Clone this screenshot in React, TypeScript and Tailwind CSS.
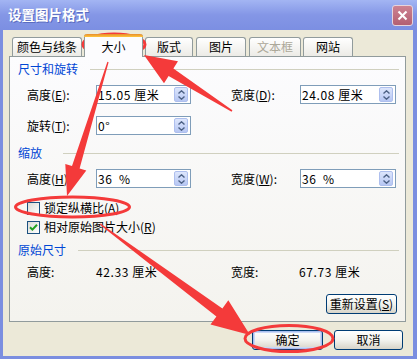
import React from "react";

const F = "font-['Noto_Sans_CJK_SC',sans-serif]";

function Spin({ value, w }: { value: string; w: string }) {
  return (
    <div className={`${w} h-[19px] border border-[#7f9db9] bg-white flex items-center`}>
      <span className="pl-[1px] text-[12px] leading-none whitespace-pre text-black tracking-[0.6px]">{value}</span>
      <div className="ml-auto mr-[2px] w-[14px] h-[15px] rounded-[2px] border border-[#aebfee] bg-linear-to-b from-[#dde6fc] to-[#b7c7f3] flex flex-col items-center justify-center gap-[2px]">
        <svg width="7" height="4" viewBox="0 0 7 4">
          <polyline points="0.5,3.5 3.5,0.8 6.5,3.5" fill="none" stroke="#4d6185" strokeWidth="1.4" />
        </svg>
        <svg width="7" height="4" viewBox="0 0 7 4">
          <polyline points="0.5,0.5 3.5,3.2 6.5,0.5" fill="none" stroke="#4d6185" strokeWidth="1.4" />
        </svg>
      </div>
    </div>
  );
}

function Heading({ text, gap }: { text: string; gap: string }) {
  return (
    <div className={`h-[16px] flex items-center pl-[8px] pr-[6px] ${gap}`}>
      <span className="text-[12px] leading-none text-[#0046d5]">{text}</span>
      <div className="flex-1 h-px bg-[#d0d0bf]" />
    </div>
  );
}

function Label({ children, w = "w-[69px]" }: { children: React.ReactNode; w?: string }) {
  return <span className={`${w} text-[12px] leading-none text-black whitespace-pre`}>{children}</span>;
}

function Check({ checked }: { checked?: boolean }) {
  return (
    <div className="w-[13px] h-[13px] border border-[#1c5180] bg-linear-to-br from-[#dcdcd7] to-white flex items-center justify-center">
      {checked && (
        <svg width="9" height="9" viewBox="0 0 9 9">
          <polyline points="1,4.2 3.4,6.6 8,1.8" fill="none" stroke="#21a121" strokeWidth="2" />
        </svg>
      )}
    </div>
  );
}

function Btn({ children, w, def }: { children: React.ReactNode; w: string; def?: boolean }) {
  return (
    <div
      className={`${w} h-[20px] rounded-[3px] border border-[#003c74] bg-linear-to-b from-white via-[#f3f3ef] to-[#d8d4c8] flex items-center justify-center text-[12px] leading-none text-black ${
        def ? "shadow-[inset_0_0_0_1px_#a9bff0,inset_0_0_0_2px_#cbd8f6]" : ""
      }`}
    >
      {children}
    </div>
  );
}

function Tab({ text, w, ml, disabled }: { text: string; w: string; ml: string; disabled?: boolean }) {
  return (
    <div
      className={`${w} ${ml} h-[19px] rounded-t-[3px] border border-b-0 border-[#919b9c] bg-linear-to-b from-white to-[#ecebe6] flex items-center justify-center text-[12px] leading-none ${
        disabled ? "text-[#aca899]" : "text-black"
      }`}
    >
      {text}
    </div>
  );
}

export default function App() {
  return (
    <div className={`${F} relative w-[417px] h-[359px] bg-[#7b8ee0] flex flex-col overflow-hidden`}>
      {/* title bar */}
      <div className="h-[30px] flex items-center justify-between pl-[8px] pr-[4px] bg-linear-to-b from-[#a3b5f3] via-[#8496e6] to-[#7c8fe2]">
        <span className="text-[13.5px] font-bold text-white leading-none [text-shadow:1px_1px_0_#5a6cc0]">设置图片格式</span>
        <div className="w-[21px] h-[21px] rounded-[3px] border border-[#e6d4dc] bg-linear-to-b from-[#cd8292] to-[#b35f72] flex items-center justify-center">
          <svg width="11" height="11" viewBox="0 0 11 11">
            <line x1="1.5" y1="1.5" x2="9.5" y2="9.5" stroke="white" strokeWidth="2.2" />
            <line x1="9.5" y1="1.5" x2="1.5" y2="9.5" stroke="white" strokeWidth="2.2" />
          </svg>
        </div>
      </div>

      {/* body */}
      <div className="flex-1 ml-[3px] mr-[4px] mb-[3px] bg-[#ece9d8] flex flex-col">
        {/* tabs */}
        <div className="h-[26px] flex items-end pl-[9px]">
          <Tab text="颜色与线条" w="w-[70px]" ml="ml-0" />
          <div className="relative z-10 ml-[2px] w-[59px] h-[23px] -mb-[1px] rounded-t-[3px] border-x border-[#919b9c] bg-[#fcfcfe] flex flex-col">
            <div className="h-[3px] rounded-t-[3px] bg-linear-to-b from-[#e68b2c] to-[#ffc73c] -mx-[1px]" />
            <div className="flex-1 flex items-center justify-center text-[12px] leading-none text-black">大小</div>
          </div>
          <Tab text="版式" w="w-[48px]" ml="ml-[2px]" />
          <Tab text="图片" w="w-[50px]" ml="ml-[3px]" />
          <Tab text="文本框" w="w-[52px]" ml="ml-[3px]" disabled />
          <Tab text="网站" w="w-[50px]" ml="ml-[2px]" />
        </div>

        {/* panel */}
        <div className="ml-[6px] w-[397px] h-[266px] border border-[#919b9c] bg-linear-to-b from-[#fcfcfe] to-[#f4f3ee] flex flex-col pt-[4px]">
          <Heading text="尺寸和旋转" gap="gap-[12px]" />
          <div className="mt-[8px] flex items-center pl-[17px]">
            <Label>高度(<u>E</u>):</Label>
            <Spin value="15.05 厘米" w="w-[95px]" />
            <span className="ml-[40px]" />
            <Label>宽度(<u>D</u>):</Label>
            <Spin value="24.08 厘米" w="w-[96px]" />
          </div>
          <div className="mt-[12px] flex items-center pl-[17px]">
            <Label>旋转(<u>T</u>):</Label>
            <Spin value="0°" w="w-[95px]" />
          </div>

          <div className="mt-[10px]">
            <Heading text="缩放" gap="gap-[21px]" />
          </div>
          <div className="mt-[8px] flex items-center pl-[17px]">
            <Label>高度(<u>H</u>):</Label>
            <Spin value="36  %" w="w-[95px]" />
            <span className="ml-[40px]" />
            <Label>宽度(<u>W</u>):</Label>
            <Spin value="36  %" w="w-[96px]" />
          </div>
          <div className="mt-[12px] h-[16px] flex items-center pl-[17px] gap-[4px]">
            <Check />
            <span className="text-[12px] leading-none">锁定纵横比(<u>A</u>)</span>
          </div>
          <div className="mt-[3px] h-[16px] flex items-center pl-[17px] gap-[4px]">
            <Check checked />
            <span className="text-[12px] leading-none">相对原始图片大小(<u>R</u>)</span>
          </div>

          <div className="mt-[7px]">
            <Heading text="原始尺寸" gap="gap-[12px]" />
          </div>
          <div className="mt-[6px] h-[16px] flex items-center pl-[17px]">
            <Label>高度:</Label>
            <span className="w-[135px] text-[12px] leading-none whitespace-pre tracking-[0.6px]">42.33 厘米</span>
            <Label w="w-[68px]">宽度:</Label>
            <span className="text-[12px] leading-none whitespace-pre tracking-[0.6px]">67.73 厘米</span>
          </div>
          <div className="mt-[14px] flex justify-end pr-[8px]">
            <Btn w="w-[71px]">重新设置(<u>S</u>)</Btn>
          </div>
        </div>

        {/* dialog buttons */}
        <div className="mt-[8px] flex justify-end pr-[10px] gap-[11px]">
          <Btn w="w-[71px]" def>确定</Btn>
          <Btn w="w-[69px]">取消</Btn>
        </div>
      </div>

      {/* red annotations */}
      <svg className="absolute left-0 top-0 pointer-events-none" width="417" height="359" viewBox="0 0 417 359">
        <g fill="#f43a3a">
          <polygon points="144,55 178,61.2 173.4,68.4 232.4,110.3 231.6,111.7 168.6,76 164,83.2" />
          <polygon points="67,196 86.3,170.5 79.6,168.5 108.6,62.2 107.4,61.8 72,166.1 65.3,164.1" />
          <polygon points="250,335 210.5,324.5 216.4,316.4 99.6,224.5 100.4,223.5 222.4,308.4 228.3,300.3" />
        </g>
        <g fill="none" stroke="#f43a3a" strokeWidth="3">
          <ellipse cx="114" cy="44.5" rx="31" ry="10.5" />
          <ellipse cx="72.5" cy="207" rx="57" ry="10" />
          <ellipse cx="289" cy="338.5" rx="44" ry="13" />
        </g>
      </svg>
    </div>
  );
}
